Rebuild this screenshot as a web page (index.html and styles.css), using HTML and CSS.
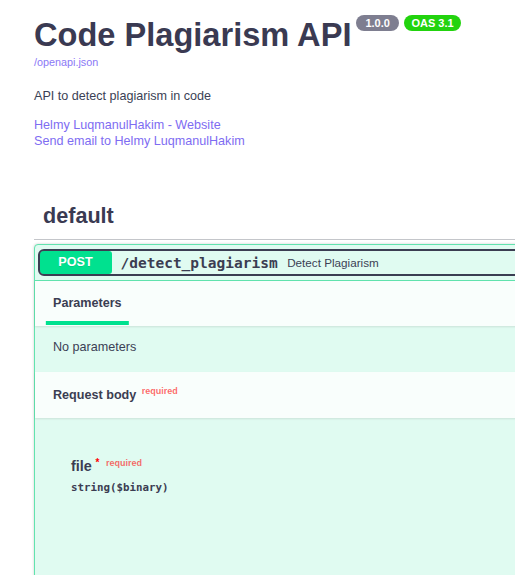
FILE: index.html
```html
<!DOCTYPE html>
<html lang="en">
<head>
<meta charset="utf-8">
<title>Code Plagiarism API</title>
<link rel="stylesheet" href="styles.css">
</head>
<body>
<div class="page">
  <section class="info">
    <hgroup class="main">
      <h2 class="title">Code Plagiarism API<span class="badge ver">1.0.0</span><span class="badge oas">OAS 3.1</span></h2>
      <a class="base-url" href="#">/openapi.json</a>
    </hgroup>
    <p class="desc">API to detect plagiarism in code</p>
    <div class="contact">
      <a class="link" href="#">Helmy LuqmanulHakim - Website</a>
      <a class="link" href="#">Send email to Helmy LuqmanulHakim</a>
    </div>
  </section>

  <section class="tag-section">
    <h3 class="tag">default</h3>
    <div class="opblock">
      <div class="summary">
        <div class="control">
          <span class="method">POST</span>
          <span class="path">/detect_plagiarism</span>
          <span class="summary-desc">Detect Plagiarism</span>
        </div>
      </div>
      <div class="section-header tabs">
        <span class="tab-item"><span class="tab-label">Parameters</span></span>
      </div>
      <div class="params-body">
        <p class="no-params">No parameters</p>
      </div>
      <div class="section-header">
        <h4 class="section-title">Request body<span class="req-note">required</span></h4>
      </div>
      <div class="request-body">
        <div class="prop-name">file<span class="star">&nbsp;*</span><span class="req-note prop-req">required</span></div>
        <div class="prop-type">string($binary)</div>
      </div>
    </div>
  </section>
</div>
</body>
</html>
```
FILE: styles.css
```css
html, body {
  margin: 0;
  padding: 0;
  overflow: hidden;
  background: #ffffff;
}

body {
  font-family: "Liberation Sans", Arial, sans-serif;
  color: #3b3f55;
}

.page {
  width: 700px;
  padding: 15px 0 0 34px;
}

/* ---------- info ---------- */
.info {
  margin: 0 0 45px;
}

.main {
  margin: 0 0 18px;
}

.title {
  margin: 0;
  font-size: 32.6px;
  line-height: 40px;
  font-weight: 700;
  color: #3a3a52;
}

.badge {
  display: inline-block;
  vertical-align: top;
  height: 16px;
  line-height: 16px;
  margin-left: 5px;
  border-radius: 50px;
  font-size: 11px;
  font-weight: 700;
  color: #ffffff;
}

.ver {
  background: #7e7e90;
  padding: 0 9px;
}

.oas {
  background: #22d30e;
  padding: 0 7.5px;
}

.base-url {
  display: block;
  font-size: 10.8px;
  line-height: 15px;
  color: #8a78f6;
  text-decoration: none;
}

.desc {
  margin: 0 0 12px;
  font-size: 12.6px;
  line-height: 17px;
  color: #3b3f55;
}

.contact {
  display: flex;
  flex-direction: column;
  align-items: flex-start;
}

.link {
  font-size: 12.6px;
  line-height: 16px;
  color: #7e6cf2;
  text-decoration: none;
}

/* ---------- tag ---------- */
.tag {
  margin: 0;
  padding: 9px 18px 11px 9px;
  font-size: 21.6px;
  line-height: 25px;
  font-weight: 700;
  color: #3a3a52;
  border-bottom: 1px solid rgba(59, 65, 81, 0.3);
}

.opblock {
  margin-top: 4px;
  border: 1px solid #62e3ae;
  border-radius: 4px;
  background: #e0fbf1;
  box-shadow: 0 0 3px rgba(0, 0, 0, 0.19);
}

.summary {
  display: flex;
  align-items: center;
  padding: 6px 4.5px 6px;
  border-bottom: 1px solid #62e3ae;
}

.control {
  flex: 1;
  display: flex;
  align-items: center;
  height: 23px;
  border-radius: 4px;
  outline: 2px solid #3b3d52;
}

.method {
  width: 72px;
  height: 23px;
  line-height: 23px;
  text-align: center;
  background: #00e18f;
  border-radius: 3px;
  color: #ffffff;
  font-size: 12.6px;
  font-weight: 700;
  text-shadow: 0 1px 0 rgba(0, 0, 0, 0.1);
}

.path {
  padding: 0 9.5px 0 9px;
  font-family: "DejaVu Sans Mono", monospace;
  font-size: 14.5px;
  font-weight: 700;
  color: #3b3d52;
}

.summary-desc {
  font-size: 11.7px;
  color: #3b3f55;
}

.section-header {
  display: flex;
  align-items: center;
  min-height: 46px;
  padding: 0 18px;
  background: rgba(255, 255, 255, 0.8);
  box-shadow: 0 1px 2px rgba(0, 0, 0, 0.1);
  box-sizing: border-box;
}

.tabs {
  min-height: 45px;
}

.tab-item {
  font-size: 12.6px;
  font-weight: 700;
  color: #3b3d52;
}

.tab-label {
  position: relative;
  display: inline-block;
  line-height: 15px;
}

.tab-label::after {
  content: "";
  position: absolute;
  left: 50%;
  bottom: -13.5px;
  width: 120%;
  height: 3.6px;
  transform: translateX(-50%);
  background: #00e18f;
}

.params-body {
  padding: 12px 18px 16px;
}

.no-params {
  margin: 0;
  font-size: 12.6px;
  line-height: 18px;
  color: #3b3f55;
}

.section-title {
  margin: 0;
  font-size: 12.6px;
  font-weight: 700;
  color: #3b3d52;
}

.req-note {
  position: relative;
  top: -5.4px;
  padding: 0 4.5px;
  font-size: 9px;
  font-weight: 700;
  color: rgba(255, 0, 0, 0.6);
}

.section-title .req-note {
  padding-left: 5.5px;
}

.prop-name .prop-req {
  padding-left: 6.5px;
}

.request-body {
  min-height: 300px;
  padding: 39px 18px 0 36px;
}

.prop-name {
  font-size: 14.4px;
  line-height: 18px;
  font-weight: 700;
  color: #3b3d52;
}

.star {
  position: relative;
  top: -5px;
  padding-left: 1px;
  font-size: 10px;
  color: #ff0000;
}

.prop-type {
  margin-top: 3.5px;
  font-family: "DejaVu Sans Mono", monospace;
  font-size: 10.8px;
  line-height: 14px;
  font-weight: 700;
  color: #3b3d52;
}
```
